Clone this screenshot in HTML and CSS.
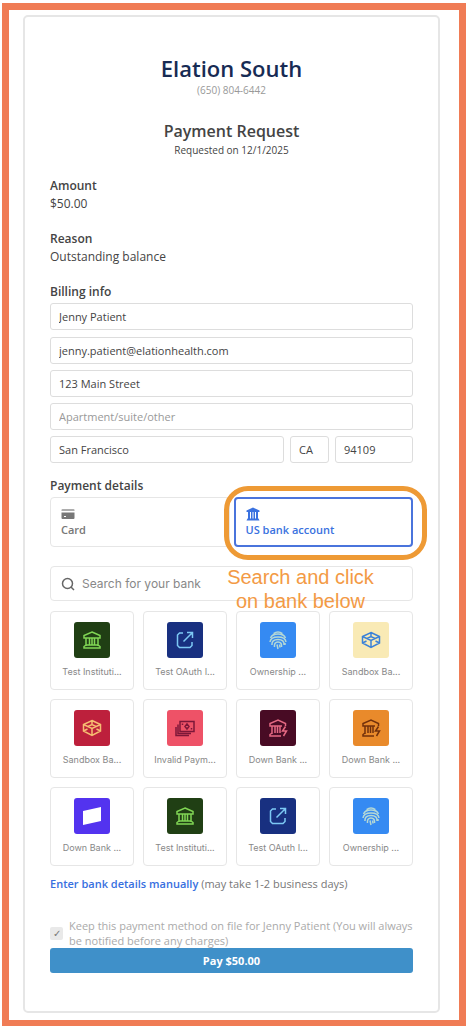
FILE: index.html
```html
<!DOCTYPE html>
<html lang="en">
<head>
    <meta charset="UTF-8">
    <meta name="viewport" content="width=device-width, initial-scale=1.0">
    <title>Payment Request</title>
    <link rel="stylesheet" href="styles.css">
</head>
<body>

<!-- Shared icons -->
<svg class="sprite" aria-hidden="true">
    <symbol id="bank" viewBox="0 0 20 20">
        <path d="M10 2 18 5.500V8H2V5.500ZM4 8v8M16 8v8M7.500 8v7M10 8v7M12.500 8v7M4 15 2 16.500V18h16v-1.500L16 15Z"/>
    </symbol>
    <symbol id="link" viewBox="0 0 20 20">
        <path d="M8 3H4.500L2.500 5v10.500l2 2H15l2-2V12M12 2.500h5.500V8M17.500 2.500 8.500 11.500"/>
    </symbol>
    <symbol id="finger" viewBox="0 0 20 20">
        <path d="M5.500 3.500Q10 .5 14.500 3.500M2.500 8Q4 4 10 4t7.500 4M2 12Q2.500 7 10 7t8 5M4 15Q3.500 9.500 10 9.500t6 5.500M6.500 17Q6 12 10 12t3.500 5M9 14.500l1 4.500M11.500 14.500l.5 3M17 13v2"/>
    </symbol>
    <symbol id="box" viewBox="0 0 20 20">
        <path d="M10 2.500 18.500 6.500V13L10 17.500 1.500 13V6.500ZM1.500 6.500 10 10.500l8.500-4M10 10.500v7M10 2.500v4M6 8.500l4-2 4 2M1.500 13l4-2M18.500 13l-4-2"/>
    </symbol>
    <symbol id="cash" viewBox="0 0 20 20">
        <path d="M5 3.500h14v10H5ZM3 6.500v9h13M1 9v8.500h13"/>
        <path d="M12 6 14 8.500 12 11 10 8.500ZM7.500 5.500v1.500M16.500 10v1.500"/>
    </symbol>
    <symbol id="bankdown" viewBox="0 0 20 20">
        <path d="M17.500 8V5.500L10 2 2 5.500V8h12M4 8v8M7 8v7M9.500 8v7M12 8v7M4 15l-2 1.500V18h11M17.500 8.500 14.500 13h4L15.500 18"/>
    </symbol>
    <symbol id="flag" viewBox="0 0 20 20">
        <path class="solid" d="M1 5 19 1v14L1 19Z"/>
    </symbol>
</svg>

<div class="frame">
    <form class="card">
        <header class="header">
            <h1>Elation South</h1>
            <p class="phone">(650) 804-6442</p>
            <h2>Payment Request</h2>
            <p class="date">Requested on 12/1/2025</p>
        </header>

        <section class="info">
            <h3>Amount</h3>
            <p>$50.00</p>
        </section>
        <section class="info">
            <h3>Reason</h3>
            <p>Outstanding balance</p>
        </section>

        <section class="billing">
            <h3>Billing info</h3>
            <input class="field name" type="text" aria-label="Name" value="Jenny Patient">
            <input class="field" type="email" aria-label="Email" value="jenny.patient@elationhealth.com">
            <input class="field" type="text" aria-label="Street" value="123 Main Street">
            <input class="field" type="text" aria-label="Apartment" placeholder="Apartment/suite/other">
            <div class="city-row">
                <input class="field" type="text" aria-label="City" value="San Francisco">
                <input class="field" type="text" aria-label="State" value="CA">
                <input class="field" type="text" aria-label="Zip code" value="94109">
            </div>
        </section>

        <section class="payment">
            <h3>Payment details</h3>
            <div class="methods">
                <button type="button" class="method">
                    <svg viewBox="0 0 14 14"><path opacity=".6" d="M1.500 2h11a1 1 0 0 1 1 1v1H.5V3a1 1 0 0 1 1-1Z"/><path d="M.5 5.500h13V11a1 1 0 0 1-1 1h-11a1 1 0 0 1-1-1ZM3 9v1h2V9Z" fill-rule="evenodd"/></svg>
                    Card
                </button>
                <div class="method-wrap">
                    <button type="button" class="method active">
                        <svg viewBox="0 0 14 14"><path d="M7 .5 13.500 3.500V5H.5V3.500ZM2 5h2v7H2ZM5 5h1.500v7H5ZM7.500 5H9v7H7.500ZM10 5h2v7h-2ZM1.500 11.500h11l1 2H.5Z"/></svg>
                        US bank account
                    </button>
                    <div class="highlight"></div>
                    <div class="note">Search and click<br>on bank below</div>
                </div>
            </div>

            <div class="search">
                <svg viewBox="0 0 14 14"><circle cx="6.500" cy="6.500" r="5"/><path d="m10 10 3 3"/></svg>
                <input type="text" aria-label="Search for your bank" placeholder="Search for your bank">
            </div>

            <div class="banks">
                <button type="button" class="bank"><span class="logo green"><svg><use href="#bank"/></svg></span><span class="bank-name">Test Instituti...</span></button>
                <button type="button" class="bank"><span class="logo navy"><svg><use href="#link"/></svg></span><span class="bank-name">Test OAuth I...</span></button>
                <button type="button" class="bank"><span class="logo blue"><svg><use href="#finger"/></svg></span><span class="bank-name">Ownership ...</span></button>
                <button type="button" class="bank"><span class="logo cream"><svg><use href="#box"/></svg></span><span class="bank-name">Sandbox Ba...</span></button>
                <button type="button" class="bank"><span class="logo red"><svg><use href="#box"/></svg></span><span class="bank-name">Sandbox Ba...</span></button>
                <button type="button" class="bank"><span class="logo pink"><svg><use href="#cash"/></svg></span><span class="bank-name">Invalid Paym...</span></button>
                <button type="button" class="bank"><span class="logo maroon"><svg><use href="#bankdown"/></svg></span><span class="bank-name">Down Bank ...</span></button>
                <button type="button" class="bank"><span class="logo orange"><svg><use href="#bankdown"/></svg></span><span class="bank-name">Down Bank ...</span></button>
                <button type="button" class="bank"><span class="logo purple"><svg><use href="#flag"/></svg></span><span class="bank-name">Down Bank ...</span></button>
                <button type="button" class="bank"><span class="logo green"><svg><use href="#bank"/></svg></span><span class="bank-name">Test Instituti...</span></button>
                <button type="button" class="bank"><span class="logo navy"><svg><use href="#link"/></svg></span><span class="bank-name">Test OAuth I...</span></button>
                <button type="button" class="bank"><span class="logo blue"><svg><use href="#finger"/></svg></span><span class="bank-name">Ownership ...</span></button>
            </div>

            <p class="manual"><a href="#">Enter bank details manually</a> <span>(may take 1-2 business days)</span></p>
        </section>

        <div class="keep">
            <input type="checkbox" id="keep" checked disabled>
            <label for="keep">Keep this payment method on file for Jenny Patient (You will always be notified before any charges)</label>
        </div>
        <button type="submit" class="pay">Pay $50.00</button>
    </form>
</div>

</body>
</html>
```
FILE: styles.css
```css
* {
    box-sizing: border-box;
}

body {
    margin: 0;
    padding: 3px 4px 0 2px;
    background-color: #fff;
    color: #444;
    font-family: "Open Sans", "Noto Sans", sans-serif;
    font-size: 12px;
    line-height: 18px;
}

h1, h2, h3, p {
    margin: 0;
}

button, input {
    font-family: inherit;
}

.sprite {
    display: none;
}

.frame {
    border: 7px solid #f07c55;
    padding: 5px 19px 7px 14px;
}

.card {
    border: 2px solid #e6e6e6;
    border-radius: 5px;
    padding: 36px 25px 38px;
}

.header {
    text-align: center;
    margin-bottom: 18px;
}

.header h1 {
    color: #172b54;
    font-size: 22px;
    font-weight: 600;
    line-height: 30px;
}

.phone {
    color: #999;
    font-size: 10px;
    line-height: 14px;
    margin-bottom: 24px;
}

.header h2 {
    font-size: 16px;
    font-weight: 600;
    line-height: 20px;
}

.date {
    font-size: 10px;
}

h3 {
    font-size: 12px;
    font-weight: 600;
    line-height: 18px;
}

.info {
    margin-bottom: 17px;
}

.billing {
    display: flex;
    flex-direction: column;
    gap: 6px;
    margin-bottom: 14px;
}

.billing h3 {
    margin-bottom: -4px;
}

.field {
    width: 100%;
    min-width: 0;
    height: 27px;
    padding: 0 8px;
    border: 1px solid #ddd;
    border-radius: 3px;
    background-color: #fff;
    color: #444;
    font-size: 11px;
}

.name {
    margin-bottom: 1px;
}

.field::placeholder {
    color: #999;
}

.city-row {
    display: grid;
    grid-template-columns: 6fr 1fr 2fr;
    gap: 6px;
}

/* payment method tabs */
.methods {
    display: grid;
    grid-template-columns: 1fr 1fr;
    gap: 4px;
    margin: 2px 0 19px;
}

.method {
    display: flex;
    flex-direction: column;
    align-items: flex-start;
    justify-content: center;
    gap: 1px;
    width: 100%;
    height: 50px;
    padding: 0 10px;
    border: 1px solid #e6e6e6;
    border-radius: 4px;
    background-color: #fff;
    color: #777;
    font-size: 11px;
    font-weight: 600;
    line-height: 16px;
}

.method svg {
    width: 14px;
    height: 14px;
    fill: currentColor;
}

.method-wrap {
    position: relative;
}

.method.active {
    border: 2px solid #4a74dc;
    color: #3a72e0;
}

.highlight {
    position: absolute;
    top: -11px;
    right: -14px;
    bottom: -13px;
    left: -10px;
    border: 5px solid #ee9a35;
    border-radius: 24px;
    pointer-events: none;
}

.note {
    position: absolute;
    top: 68px;
    left: -10px;
    width: 154px;
    color: #f39a45;
    font-family: "Liberation Sans", Arial, sans-serif;
    font-size: 20px;
    line-height: 24px;
    text-align: center;
    pointer-events: none;
}

.search {
    display: flex;
    align-items: center;
    gap: 7px;
    height: 35px;
    padding: 0 10px;
    border: 1px solid #e6e6e6;
    border-radius: 4px;
    margin-bottom: 10px;
}

.search svg {
    width: 14px;
    height: 14px;
    fill: none;
    stroke: #666;
    stroke-width: 1.5;
}

.search input {
    flex: 1;
    min-width: 0;
    padding: 0;
    border: none;
    background: none;
    font-family: Inter, sans-serif;
    font-size: 12px;
}

.search input::placeholder {
    color: #888;
}

/* bank list */
.banks {
    display: grid;
    grid-template-columns: repeat(4, 1fr);
    gap: 9px;
}

.bank {
    display: flex;
    flex-direction: column;
    align-items: center;
    gap: 8px;
    min-width: 0;
    height: 79px;
    padding: 10px 0 0;
    border: 1px solid #e6e6e6;
    border-radius: 4px;
    background-color: #fff;
    color: #888;
    font-family: Inter, sans-serif;
    font-size: 9px;
    line-height: 12px;
}

.bank-name {
    white-space: nowrap;
}

.logo {
    display: flex;
    align-items: center;
    justify-content: center;
    width: 36px;
    height: 36px;
    border-radius: 3px;
}

.logo svg {
    width: 20px;
    height: 20px;
    fill: none;
    stroke: currentColor;
    stroke-width: 1.5;
}

.solid {
    fill: currentColor;
    stroke: none;
}

.green {
    background-color: #203f14;
    color: #80d654;
}

.navy {
    background-color: #183080;
    color: #7cc8f4;
}

.blue {
    background-color: #358af2;
    color: #b5d8d5;
}

.cream {
    background-color: #f9eab5;
    color: #3b82d8;
}

.red {
    background-color: #bd203c;
    color: #f6bd72;
}

.pink {
    background-color: #ee5267;
    color: #7d1738;
}

.maroon {
    background-color: #480b24;
    color: #e56983;
}

.orange {
    background-color: #e98a2b;
    color: #71300c;
}

.purple {
    background-color: #5333ef;
    color: #fff;
}

.manual {
    margin: 9px 0 25px;
    color: #777;
    font-size: 11px;
}

.manual a {
    color: #376fe0;
    font-weight: 600;
    text-decoration: none;
}

.keep {
    display: flex;
    align-items: center;
    gap: 6px;
    color: #aaa;
    font-size: 11px;
    line-height: 15px;
}

.keep input {
    appearance: none;
    flex: none;
    width: 13px;
    height: 13px;
    margin: 0;
    border-radius: 2px;
    background-color: #e9e9e9;
    font-size: 10px;
    line-height: 13px;
    text-align: center;
}

.keep input:checked::before {
    content: "✓";
    color: #777;
}

.pay {
    display: block;
    width: 100%;
    height: 25px;
    border: none;
    border-radius: 3px;
    background-color: #3f90c9;
    color: #fff;
    font-size: 11px;
    font-weight: 700;
    cursor: pointer;
}
```
